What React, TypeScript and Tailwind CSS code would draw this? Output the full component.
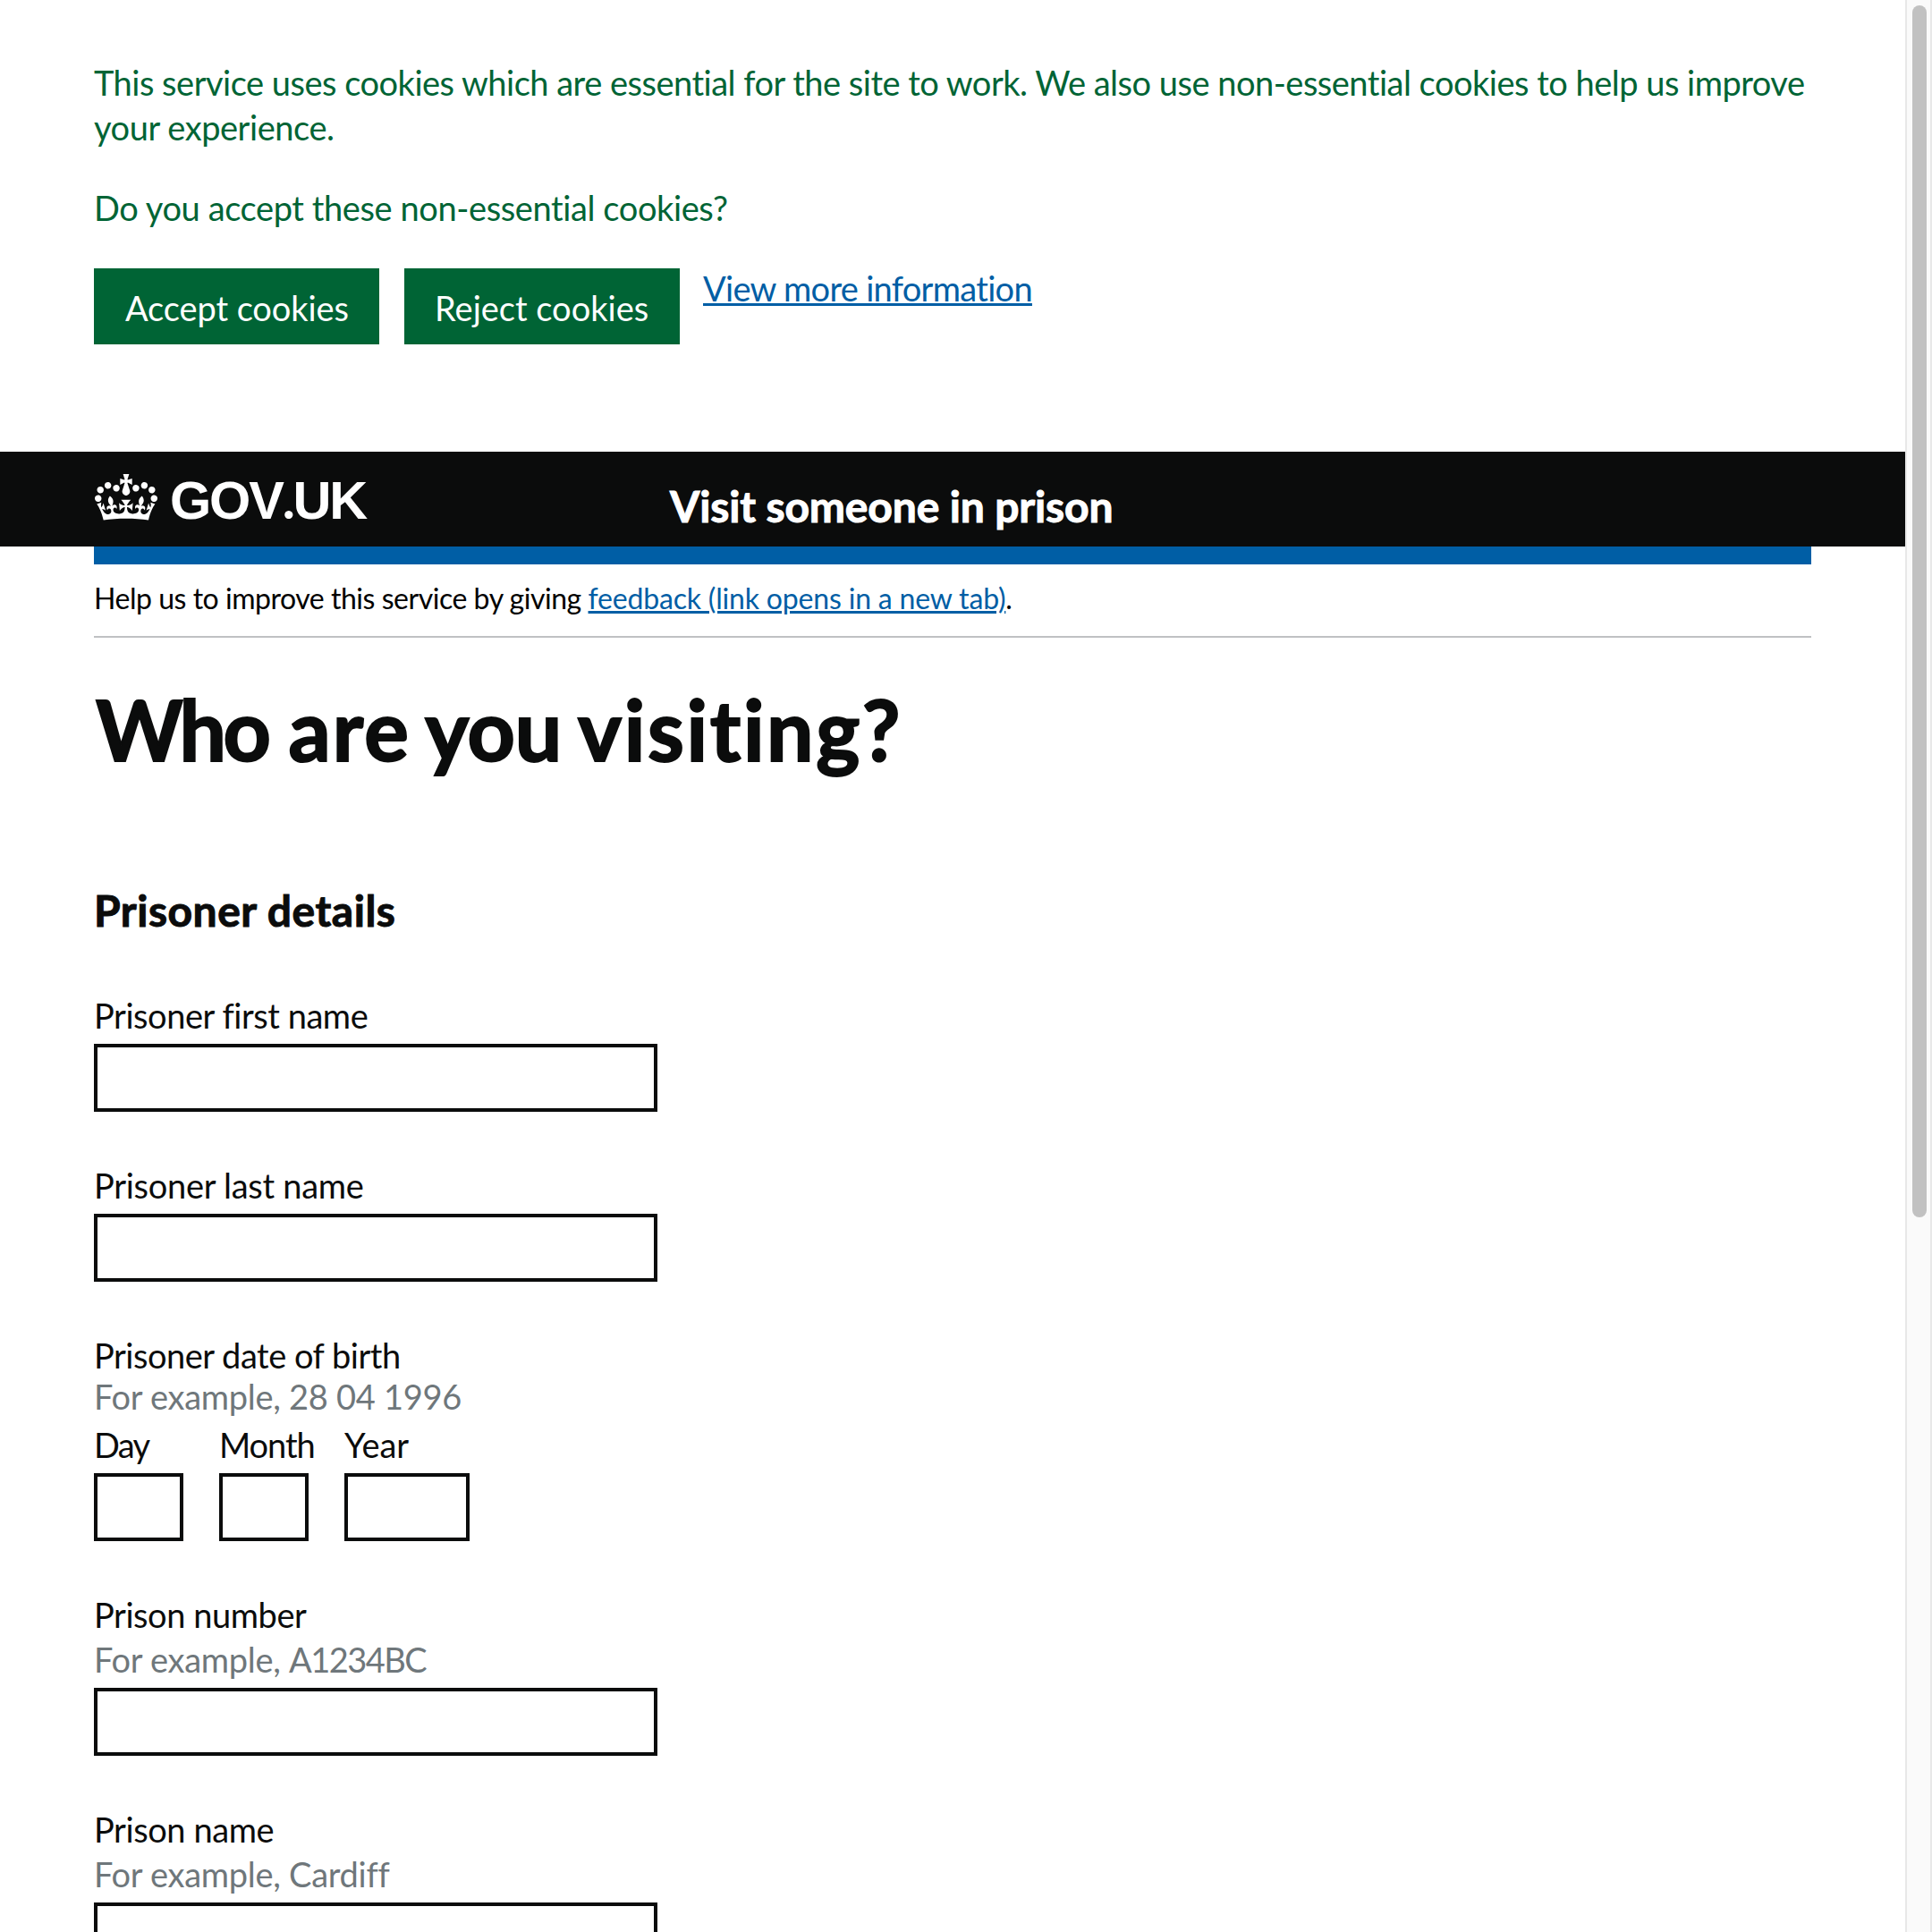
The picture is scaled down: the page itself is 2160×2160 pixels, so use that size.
import type { ReactNode } from "react";

function Crown() {
  return (
    <svg viewBox="0 0 132 97" className="h-[52px] w-[70px] shrink-0" fill="currentColor" preserveAspectRatio="none" aria-hidden="true">
      <path
        fillRule="evenodd"
        d="M25 30.2c3.5 1.5 7.7-.2 9.1-3.7 1.5-3.6-.2-7.8-3.9-9.2-3.6-1.4-7.6.3-9.1 3.9-1.4 3.5.3 7.5 3.9 9zM9 39.5c3.6 1.5 7.8-.2 9.2-3.7 1.5-3.6-.2-7.8-3.9-9.1-3.6-1.5-7.6.2-9.1 3.8-1.4 3.5.3 7.5 3.8 9zM4.4 57.2c3.5 1.5 7.7-.2 9.1-3.8 1.5-3.6-.2-7.7-3.9-9.1-3.5-1.5-7.6.3-9.1 3.8-1.4 3.5.3 7.6 3.9 9.1zm38.3-21.4c3.5 1.5 7.7-.2 9.1-3.8 1.5-3.6-.2-7.7-3.9-9.1-3.6-1.5-7.6.3-9.1 3.8-1.3 3.6.4 7.7 3.9 9.1zm64.4-5.6c-3.6 1.5-7.8-.2-9.1-3.7-1.5-3.6.2-7.8 3.8-9.2 3.6-1.4 7.7.3 9.2 3.9 1.3 3.5-.4 7.5-3.9 9zm15.9 9.3c-3.6 1.5-7.7-.2-9.1-3.7-1.5-3.6.2-7.8 3.7-9.1 3.6-1.5 7.7.2 9.2 3.8 1.5 3.5-.3 7.5-3.8 9zm4.7 17.7c-3.6 1.5-7.8-.2-9.2-3.8-1.5-3.6.2-7.7 3.9-9.1 3.6-1.5 7.7.3 9.2 3.8 1.3 3.5-.4 7.6-3.9 9.1zM89.3 35.8c-3.6 1.5-7.8-.2-9.2-3.8-1.4-3.6.2-7.7 3.9-9.1 3.6-1.5 7.7.3 9.2 3.8 1.4 3.6-.3 7.7-3.9 9.1zM69.7 17.7l8.9 4.7V9.3l-8.9 2.8c-.2-.3-.5-.6-.9-.9L72.4 0H59.6l3.5 11.2c-.3.3-.6.5-.9.9l-8.8-2.8v13.1l8.8-4.7c.3.3.6.7.9.9l-5 15.4v.1c-.2.8-.4 1.6-.4 2.4 0 4.1 3.1 7.5 7 8.1h.2c.3 0 .7.1 1 .1.4 0 .7 0 1-.1h.2c4-.6 7.1-4.1 7.1-8.1 0-.8-.1-1.7-.4-2.4V34l-5.1-15.4c.4-.2.7-.6 1-.9zM66 92.8c16.9 0 32.8 1.1 47.1 3.2 4-16.9 8.9-26.7 14-33.5l-9.6-3.4c1 4.9 1.1 7.2 0 10.2-1.5-1.4-3-4.3-4.2-8.7L108.6 76c2.8-2 5-3.2 7.5-3.3-4.4 9.4-10 11.9-13.6 11.2-4.3-.8-6.3-4.6-5.6-7.9 1-4.7 5.7-5.9 8-.5 4.3-8.7-3-11.4-7.6-8.8 7.1-7.2 7.9-13.5 2.1-21.1-8 6.1-8.1 12.3-4.5 20.8-4.7-5.4-12.1-2.5-9.5 6.2 3.4-5.2 7.9-2 7.2 3.1-.6 4.3-6.4 7.8-13.5 7.2-10.3-.9-10.9-8-11.2-13.8 2.5-.5 7.1 1.8 11 7.3L80.2 60c-4.1 4.4-8 5.3-12.3 5.4 1.4-4.4 8-11.6 8-11.6H55.5s6.4 7.2 7.9 11.6c-4.2-.1-8-1-12.3-5.4l1.4 16.4c3.9-5.5 8.5-7.7 10.9-7.3-.3 5.8-.9 12.8-11.1 13.8-7.2.6-12.9-2.9-13.5-7.2-.7-5 3.8-8.3 7.1-3.1 2.7-8.7-4.6-11.6-9.4-6.2 3.7-8.5 3.6-14.7-4.6-20.8-5.8 7.6-5 13.9 2.2 21.1-4.7-2.6-11.9.1-7.7 8.8 2.3-5.5 7.1-4.2 8.1.5.7 3.3-1.3 7.1-5.7 7.9-3.5.7-9-1.8-13.5-11.2 2.5.1 4.7 1.3 7.5 3.3l-4.7-15.4c-1.2 4.4-2.7 7.2-4.3 8.7-1.1-3-.9-5.3 0-10.2l-9.5 3.4c5 6.9 9.9 16.7 14 33.5 14.8-2.1 30.8-3.2 47.7-3.2z"
      />
    </svg>
  );
}

function CookieButton({ className, children }: { className: string; children: ReactNode }) {
  return (
    <button type="button" className={`flex h-[85px] items-start whitespace-nowrap bg-[#006435] pt-[19px] text-left text-white ${className}`}>
      {children}
    </button>
  );
}

function TextInput({ className = "w-[630px]", label }: { className?: string; label: string }) {
  return <input type="text" aria-label={label} className={`mt-[7px] block h-[76px] rounded-none border-4 border-[#0b0c0c] bg-white px-2 outline-none ${className}`} />;
}

function Field({ label, labelClass, hint }: { label: string; labelClass: string; hint?: ReactNode }) {
  return (
    <div>
      <div className={labelClass}>{label}</div>
      {hint && <div className="tracking-[-0.28px] text-[#6f777b]">{hint}</div>}
      <TextInput label={label} />
    </div>
  );
}

function DatePart({ label, labelClass, inputClass }: { label: string; labelClass: string; inputClass: string }) {
  return (
    <div className="w-[100px]">
      <div className={labelClass}>{label}</div>
      <TextInput label={label} className={inputClass} />
    </div>
  );
}

function Scrollbar() {
  return (
    <div className="flex w-[30px] shrink-0 flex-col border-x-2 border-[#e8e8e8] bg-[#fafafa] pt-[6px] pl-[6px]">
      <div className="h-[1355px] w-4 rounded-full bg-[#c1c1c1]" />
    </div>
  );
}

export default function App() {
  return (
    <div className="flex h-[2160px] w-[2160px] overflow-hidden bg-white font-['Lato',sans-serif] text-[38px] leading-[50px] text-[#0b0c0c]">
      <div className="min-w-0 flex-1">
        <section className="h-[505px] pt-[67px] pl-[105px] text-[#006435]">
          <p className="whitespace-nowrap">
            <span className="tracking-[-0.5px]">
              This service uses cookies which are essential for the site to work. We also use non-essential cookies to help us improve
            </span>
            <br />
            <span className="tracking-[-0.45px]">your experience.</span>
          </p>
          <p className="mt-10 tracking-[-0.4px]">Do you accept these non-essential cookies?</p>
          <div className="mt-[43px] flex items-start">
            <CookieButton className="w-[319px] pl-[35px] tracking-[-0.09px]">Accept cookies</CookieButton>
            <CookieButton className="ml-7 w-[308px] pl-[34px]">Reject cookies</CookieButton>
            <a href="#" className="-mt-[3px] ml-[26px] tracking-[-0.7px] text-[#005ea5] underline decoration-[3px] underline-offset-[2px]">
              View more information
            </a>
          </div>
        </section>

        <header className="flex h-[106px] bg-[#0b0c0c] pl-[106px] text-white">
          <div className="flex w-[643px] pt-[25px]">
            <Crown />
            <div className="-mt-[3px] pl-[14px] font-['Liberation_Sans',sans-serif] text-[59.5px] leading-[60px] font-bold tracking-[-2.2px]">
              GOV<span className="font-['Lato',sans-serif]">.</span>UK
            </div>
          </div>
          <div className="pt-[31px] text-[48px] leading-[60px] font-bold tracking-[-0.15px] [-webkit-text-stroke:1px_currentColor]">Visit someone in prison</div>
        </header>

        <main className="mx-[105px]">
          <div className="h-5 bg-[#005ea5]" />
          <div className="h-[82px] border-b-2 border-[#bfc1c3] pt-[18px] text-[32px] leading-10 whitespace-nowrap text-black">
            <span className="tracking-[-0.47px]">Help us to improve this service by giving </span>
            <a href="#" className="tracking-[-0.18px] text-[#005ea5] underline decoration-[3px] underline-offset-[2px]">
              feedback (link opens in a new tab)
            </a>
            .
          </div>
          <h1 className="mt-[52px] pl-[2px] text-[93px] leading-[100px] font-bold tracking-[-1.13px] [word-spacing:-5.5px] [-webkit-text-stroke:2px_currentColor]">
            <span className="mr-[7px] tracking-[-3.5px]">Who</span> <span className="tracking-[2.2px]">are</span>{" "}
            <span className="mr-[2px] tracking-[-0.2px]">you</span> <span className="tracking-[2.6px]">visiting?</span>
          </h1>
          <h2 className="mt-[123px] text-[48px] leading-[60px] font-bold tracking-[0.5px] [-webkit-text-stroke:1px_currentColor]">Prisoner details</h2>

          <form className="mt-[62px] flex flex-col gap-[57px]">
            <Field label="Prisoner first name" labelClass="tracking-[-0.45px]" />
            <Field label="Prisoner last name" labelClass="tracking-[-0.27px]" />
            <div>
              <div className="tracking-[-0.48px]">Prisoner date of birth</div>
              <div className="-mt-1 mb-1 tracking-[-0.28px] text-[#6f777b]">For example, 28 04 1996</div>
              <div className="flex gap-10">
                <DatePart label="Day" labelClass="tracking-[-1.7px]" inputClass="w-[100px]" />
                <DatePart label="Month" labelClass="tracking-[-1.1px]" inputClass="w-[100px]" />
                <DatePart label="Year" labelClass="tracking-[-0.1px]" inputClass="w-[140px]" />
              </div>
            </div>
            <Field
              label="Prison number"
              labelClass="tracking-[-0.44px]"
              hint={
                <>
                  For example, <span className="tracking-[-1.55px]">A1234BC</span>
                </>
              }
            />
            <Field label="Prison name" labelClass="tracking-[-0.42px]" hint="For example, Cardiff" />
          </form>
        </main>
      </div>
      <Scrollbar />
    </div>
  );
}
